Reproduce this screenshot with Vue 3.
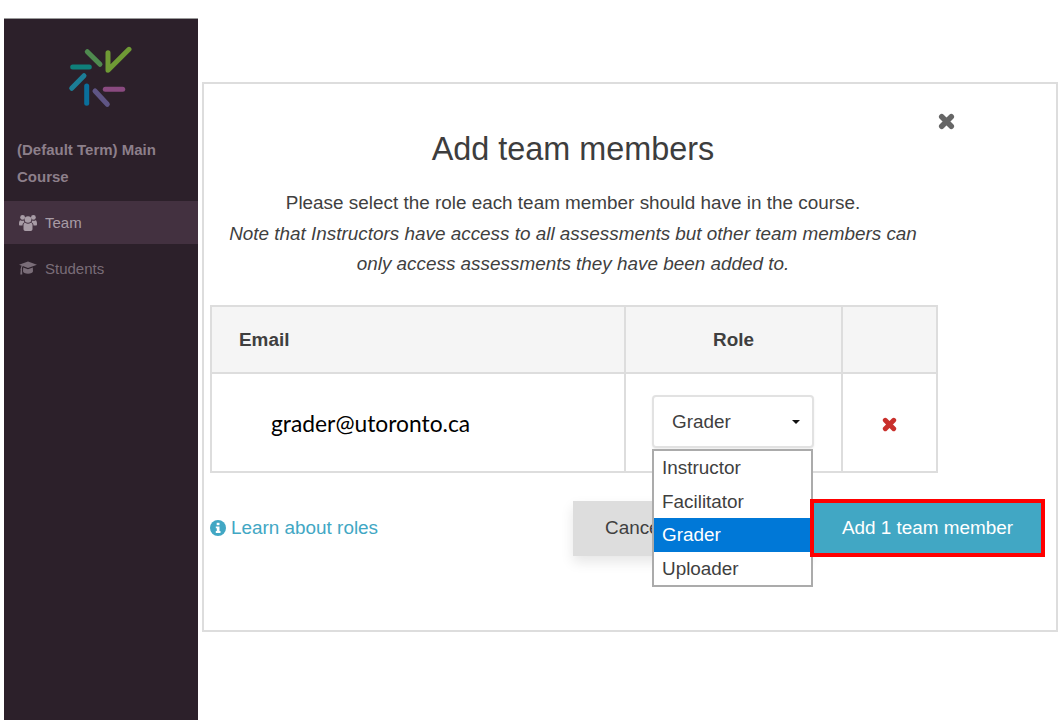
<template>
  <div class="page">
    <aside class="sidebar">
      <svg class="logo" width="64" height="64" viewBox="0 0 64 64" fill="none" stroke-width="5" stroke-linecap="round" stroke-linejoin="round">
        <path d="M19.3 6.7 32 19.3" stroke="#4f8a4f" />
        <path d="M4.7 22H21.3" stroke="#0f7f7a" />
        <path d="M16 30.7 3.7 43.3" stroke="#1c7d96" />
        <path d="M18.7 41V58.3" stroke="#0a6f9b" />
        <path d="M27 46 39.3 59.3" stroke="#5f5585" />
        <path d="M37.3 44.3H54.7" stroke="#8a4a80" />
        <path d="M40 7.7V25.3L61 4.3" stroke="#6f9a35" />
      </svg>
      <div class="course">(Default Term) Main Course</div>
      <nav class="nav">
        <div v-for="item in navItems" :key="item.label" class="nav-item" :class="{ active: item.active }">
          <svg v-if="item.icon === 'team'" class="nav-icon" viewBox="0 0 18 17" fill="currentColor">
            <circle cx="9" cy="5.500" r="3.300" />
            <circle cx="3.600" cy="3.400" r="2.400" />
            <circle cx="14.400" cy="3.400" r="2.400" />
            <path d="M4.500 11C4.500 9.500 5.300 8.800 6.300 8.800 7.800 10 10.200 10 11.700 8.800 12.700 8.800 13.500 9.500 13.500 11V15C13.500 16.200 12.800 17 11.700 17H6.300C5.200 17 4.500 16.200 4.500 15Z" />
            <path d="M1.500 6.300C2.600 7 3.600 7 4.700 6.500 4.900 7.200 5.200 7.700 5.700 8.200 4.400 8.500 3.500 9.600 3.500 11.500H1.100C.4 11.500 0 11 0 10.200 0 8 .4 6.300 1.500 6.300Z" />
            <path d="M16.500 6.300C15.400 7 14.400 7 13.300 6.500 13.100 7.200 12.800 7.700 12.300 8.200 13.600 8.500 14.500 9.600 14.500 11.500H16.900C17.600 11.500 18 11 18 10.200 18 8 17.600 6.300 16.500 6.300Z" />
          </svg>
          <svg v-else class="nav-icon" viewBox="0 0 18 17" fill="currentColor">
            <path d="M9 1.500 18 4.700 9 8 3.800 6.100C3.200 6.800 3 7.700 2.900 8.600 3.300 8.900 3.300 9.600 3 9.900L3.300 14.500H1.300L1.700 9.900C1.300 9.500 1.400 8.800 1.800 8.500 1.900 7.400 2.100 6.400 2.700 5.700L0 4.700Z" />
            <path d="M4.200 7.600 9 9.300 13.800 7.600 14 11.300C14 12.600 11.700 13.800 9 13.800S4 12.600 4 11.300Z" />
          </svg>
          <span>{{ item.label }}</span>
        </div>
      </nav>
    </aside>

    <main class="modal">
      <svg class="close" width="17" height="17" viewBox="0 0 16 16">
        <path d="M3.500 3.500 12.500 12.500M12.500 3.500 3.500 12.500" stroke="#666" stroke-width="5.200" stroke-linecap="round" />
      </svg>
      <div class="intro">
        <h1>Add team members</h1>
        <p>Please select the role each team member should have in the course.</p>
        <p class="note">Note that Instructors have access to all assessments but other team members can only access assessments they have been added to.</p>
      </div>

      <table class="members">
        <thead>
          <tr>
            <th class="email-col">Email</th>
            <th class="role-col">Role</th>
            <th class="action-col"></th>
          </tr>
        </thead>
        <tbody>
          <tr>
            <td class="email">grader@utoronto.ca</td>
            <td class="role-cell">
              <div class="role-select">
                <span>Grader</span>
                <i class="caret"></i>
              </div>
              <ul class="role-menu">
                <li v-for="role in roles" :key="role" :class="{ selected: role === selectedRole }">{{ role }}</li>
              </ul>
            </td>
            <td class="remove">
              <svg width="15" height="15" viewBox="0 0 16 16">
                <path d="M3.500 3.500 12.500 12.500M12.500 3.500 3.500 12.500" stroke="#c9302c" stroke-width="5.200" stroke-linecap="round" />
              </svg>
            </td>
          </tr>
        </tbody>
      </table>

      <footer class="actions">
        <a class="learn">
          <svg width="16" height="16" viewBox="0 0 16 16">
            <circle cx="8" cy="8" r="8" fill="#41a7c4" />
            <rect x="6.700" y="2.800" width="2.800" height="2.400" fill="#fff" />
            <path d="M5.800 6.400H9.500V11H10.500V12.900H5.800V11H6.800V8.300H5.800Z" fill="#fff" />
          </svg>
          Learn about roles
        </a>
        <div class="buttons">
          <button class="cancel">Cancel</button>
          <button class="add">Add 1 team member</button>
        </div>
      </footer>
    </main>
  </div>
</template>

<script setup>
const navItems = [
  { label: 'Team', icon: 'team', active: true },
  { label: 'Students', icon: 'students', active: false }
]

const roles = ['Instructor', 'Facilitator', 'Grader', 'Uploader']
const selectedRole = 'Grader'
</script>

<style>
html,
body {
  margin: 0;
  background: #fff;
}
</style>

<style scoped>
.page {
  display: flex;
  align-items: flex-start;
  gap: 4px;
  height: 725px;
  box-sizing: border-box;
  padding: 18px 0 0 4px;
  font-family: "Liberation Sans", Arial, sans-serif;
  color: #3f3f3f;
  overflow: hidden;
}

.sidebar {
  flex: 0 0 194px;
  height: 702px;
  box-sizing: border-box;
  padding-top: 26px;
  background: #2c202a;
  border-top: 1px solid #9a9a9a;
}

.logo {
  display: block;
  margin-left: 64px;
}

.course {
  margin: 27px 30px 11px 13px;
  font-size: 15px;
  font-weight: bold;
  line-height: 27px;
  color: #8d7f8a;
}

.nav-item {
  display: flex;
  align-items: center;
  gap: 8px;
  height: 43px;
  padding-left: 15px;
  font-size: 15px;
  color: #7a6d78;
}

.nav-item + .nav-item {
  height: 49px;
}

.nav-item.active {
  background: #433140;
  color: #a89ca6;
}

.nav-icon {
  width: 18px;
  height: 17px;
}

.modal {
  position: relative;
  flex: 0 0 856px;
  height: 550px;
  box-sizing: border-box;
  margin-top: 64px;
  padding: 0 11px 0 6px;
  border: 2px solid #ddd;
}

.close {
  position: absolute;
  top: 29px;
  left: 734px;
}

.intro {
  width: 726px;
  height: 221px;
  box-sizing: border-box;
  padding-top: 45px;
  text-align: center;
}

h1 {
  margin: 0 0 19px;
  font-size: 32.400px;
  font-weight: normal;
  line-height: 40px;
  color: #3d3d3d;
}

p {
  margin: 0;
  font-size: 18.900px;
  line-height: 30.500px;
}

.note {
  padding: 0 7px;
  font-style: italic;
}

.members {
  width: 728px;
  border-collapse: collapse;
  table-layout: fixed;
  font-size: 18.900px;
}

.members th,
.members td {
  padding: 0;
  border: 2px solid #ddd;
}

.members th {
  height: 65px;
  background: #f5f5f5;
  font-weight: bold;
}

.members td {
  height: 97px;
}

.email-col {
  width: 414px;
  padding-left: 27px !important;
  text-align: left;
  box-sizing: border-box;
}

.role-col {
  width: 215px;
}

.email {
  padding-left: 59px !important;
  font-family: Lato, "Open Sans", sans-serif;
  font-size: 22.800px;
  color: #000;
}

.role-cell {
  position: relative;
}

.role-select {
  display: flex;
  align-items: center;
  justify-content: space-between;
  width: 162px;
  height: 53px;
  box-sizing: border-box;
  margin: -1px 0 1px 26px;
  padding: 0 12px 0 18px;
  border: 2px solid #e2e2e2;
  border-radius: 4px;
  box-shadow: 0 1px 2px rgba(0, 0, 0, .08);
}

.caret {
  width: 0;
  height: 0;
  border-top: 4px solid #111;
  border-left: 4px solid transparent;
  border-right: 4px solid transparent;
}

.role-menu {
  position: absolute;
  top: 75px;
  left: 26px;
  z-index: 3;
  width: 161px;
  box-sizing: border-box;
  margin: 0;
  padding: 0;
  list-style: none;
  background: #fff;
  border: 2px solid #ababab;
}

.role-menu li {
  height: 33.500px;
  padding-left: 8px;
  line-height: 34px;
}

.role-menu li.selected {
  background: #0078d7;
  color: #fff;
}

.remove {
  text-align: center;
}

.remove svg {
  display: block;
  margin: 3px auto 0;
}

.actions {
  display: flex;
  align-items: center;
  justify-content: space-between;
  margin-top: 26px;
}

.learn {
  display: flex;
  align-items: center;
  gap: 5px;
  font-size: 18.900px;
  color: #41a7c4;
}

.buttons {
  display: flex;
  align-items: center;
}

button {
  height: 55px;
  border: 0;
  font-family: inherit;
  font-size: 18.900px;
}

.cancel {
  width: 237px;
  padding: 0 0 0 32px;
  text-align: left;
  background: #ddd;
  color: #3f3f3f;
  box-shadow: 0 6px 12px rgba(0, 0, 0, .1);
}

.add {
  position: relative;
  z-index: 4;
  width: 235px;
  height: 58px;
  border: 4px solid #f00;
  background: #41a7c4;
  color: #fff;
}
</style>
